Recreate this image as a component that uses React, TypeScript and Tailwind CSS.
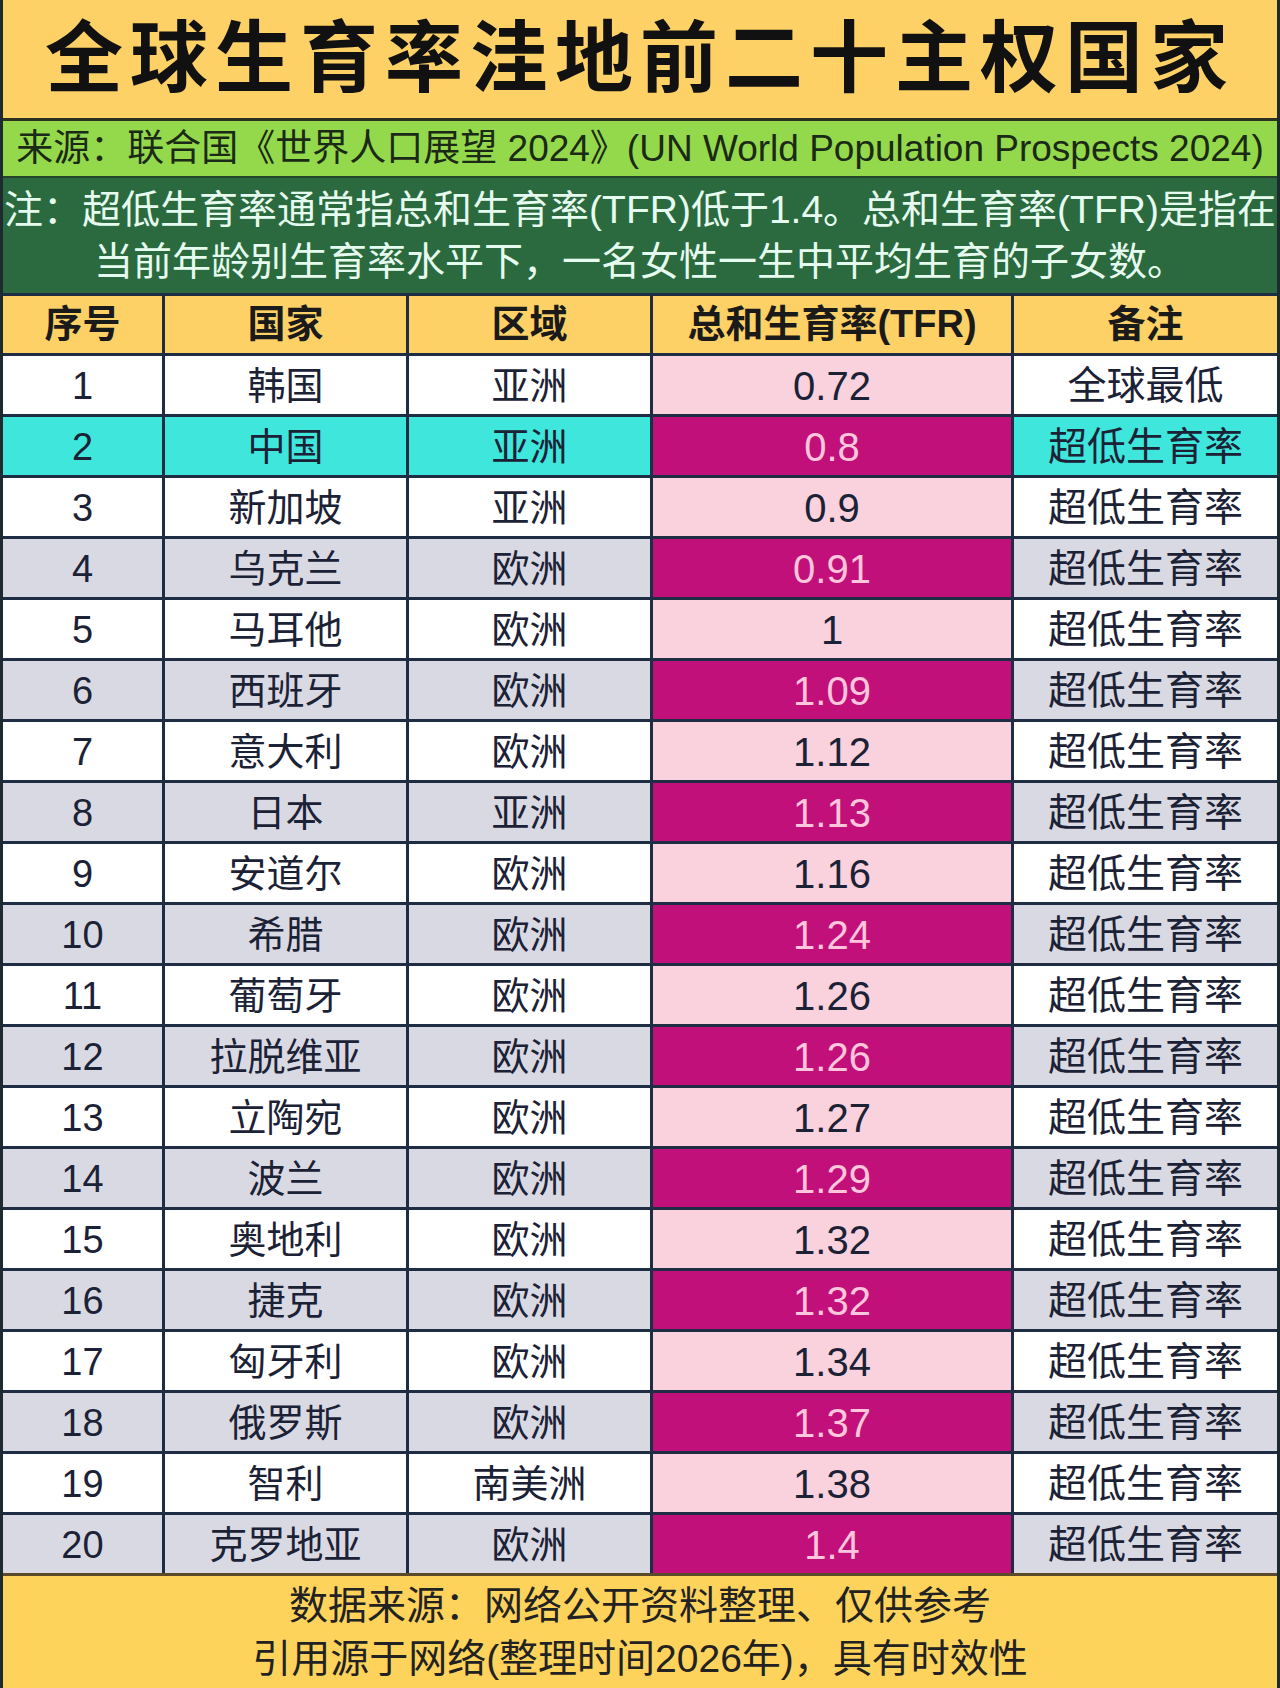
import React from "react";

const rows = [
  ["1", "韩国", "亚洲", "0.72", "全球最低"],
  ["2", "中国", "亚洲", "0.8", "超低生育率"],
  ["3", "新加坡", "亚洲", "0.9", "超低生育率"],
  ["4", "乌克兰", "欧洲", "0.91", "超低生育率"],
  ["5", "马耳他", "欧洲", "1", "超低生育率"],
  ["6", "西班牙", "欧洲", "1.09", "超低生育率"],
  ["7", "意大利", "欧洲", "1.12", "超低生育率"],
  ["8", "日本", "亚洲", "1.13", "超低生育率"],
  ["9", "安道尔", "欧洲", "1.16", "超低生育率"],
  ["10", "希腊", "欧洲", "1.24", "超低生育率"],
  ["11", "葡萄牙", "欧洲", "1.26", "超低生育率"],
  ["12", "拉脱维亚", "欧洲", "1.26", "超低生育率"],
  ["13", "立陶宛", "欧洲", "1.27", "超低生育率"],
  ["14", "波兰", "欧洲", "1.29", "超低生育率"],
  ["15", "奥地利", "欧洲", "1.32", "超低生育率"],
  ["16", "捷克", "欧洲", "1.32", "超低生育率"],
  ["17", "匈牙利", "欧洲", "1.34", "超低生育率"],
  ["18", "俄罗斯", "欧洲", "1.37", "超低生育率"],
  ["19", "智利", "南美洲", "1.38", "超低生育率"],
  ["20", "克罗地亚", "欧洲", "1.4", "超低生育率"],
];

const font = { fontFamily: '"Liberation Sans", "Noto Sans CJK SC", sans-serif' };

const Row = ({ r, i }: { r: string[]; i: number }) => {
  const even = i % 2 === 1;
  const china = i === 1;
  const base = china ? "bg-[#3fe6dc]" : even ? "bg-[#d9d9e3]" : "bg-white";
  const tfr = even ? "bg-[#c2107a] text-[#ffc6dc]" : "bg-[#f9d2de] text-[#1c2236]";
  const cell = "flex items-center justify-center border-r-[3px] border-[#1e2c44]";
  return (
    <div className="grid grid-cols-[162px_244px_244px_361px_263px] h-[61px] border-t-[3px] border-[#1e2c44] text-[38px] text-[#1c2236]">
      <div className={`${cell} ${base}`}>{r[0]}</div>
      <div className={`${cell} ${base}`}>{r[1]}</div>
      <div className={`${cell} ${base}`}>{r[2]}</div>
      <div className={`${cell} ${tfr} text-[40px]`}>{r[3]}</div>
      <div className={`flex items-center justify-center ${base} text-[39px]`}>{r[4]}</div>
    </div>
  );
};

export default function App() {
  return (
    <div className="w-[1280px] h-[1688px] flex flex-col border-x-[3px] border-[#1d2a30] overflow-hidden" style={font}>
      <div className="h-[121px] flex items-center justify-center bg-[#fdd166] border-b-[3px] border-[#2b3320]">
        <h1 className="text-[78px] font-bold tracking-[7px] text-[#111] leading-none">全球生育率洼地前二十主权国家</h1>
      </div>
      <div className="h-[57px] flex items-center justify-center bg-[#94d94b] border-b-[2px] border-[#24452a] text-[37px] text-[#1b2a17] whitespace-nowrap">
        来源：联合国《世界人口展望 2024》(UN World Population Prospects 2024)
      </div>
      <div className="h-[115px] flex flex-col items-center justify-center bg-[#2b6a3e] text-[#e6fbef] text-[39px] leading-[52px] whitespace-nowrap">
        <div>注：超低生育率通常指总和生育率(TFR)低于1.4。总和生育率(TFR)是指在</div>
        <div>当前年龄别生育率水平下，一名女性一生中平均生育的子女数。</div>
      </div>
      <div className="grid grid-cols-[162px_244px_244px_361px_263px] h-[60px] bg-[#fdd166] border-t-[3px] border-[#1e2c44] text-[38px] font-bold text-[#1a1a1a]">
        <div className="flex items-center justify-center border-r-[3px] border-[#1e2c44]">序号</div>
        <div className="flex items-center justify-center border-r-[3px] border-[#1e2c44]">国家</div>
        <div className="flex items-center justify-center border-r-[3px] border-[#1e2c44]">区域</div>
        <div className="flex items-center justify-center border-r-[3px] border-[#1e2c44]">总和生育率(TFR)</div>
        <div className="flex items-center justify-center">备注</div>
      </div>
      {rows.map((r, i) => (
        <Row key={r[0]} r={r} i={i} />
      ))}
      <div className="flex-1 flex flex-col items-center justify-center bg-[#fdd35c] border-t-[3px] border-[#5a4a2a] text-[39px] leading-[53px] text-[#222]">
        <div>数据来源：网络公开资料整理、仅供参考</div>
        <div>引用源于网络(整理时间2026年)，具有时效性</div>
      </div>
    </div>
  );
}
